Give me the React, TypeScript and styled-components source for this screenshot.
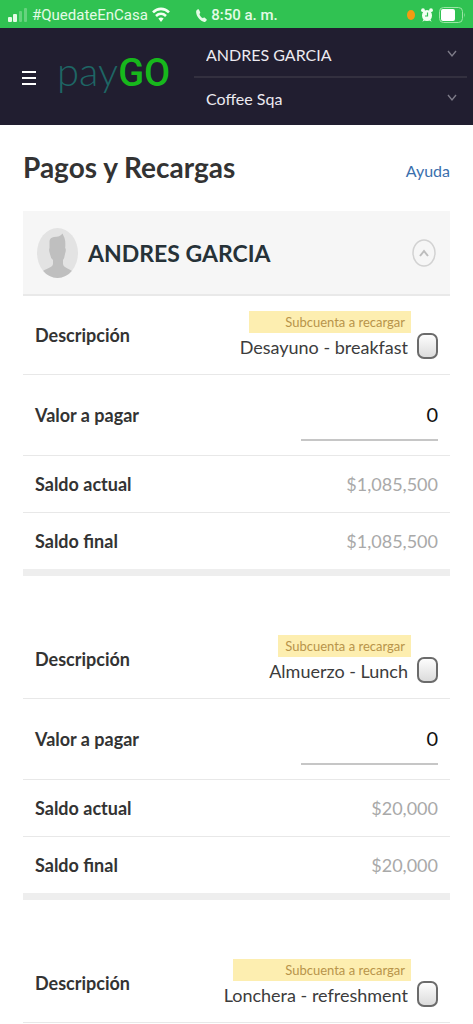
import React from "react";
import styled, { createGlobalStyle } from "styled-components";

const GlobalStyle = createGlobalStyle`
  *, *::before, *::after { box-sizing: border-box; }
  body {
    margin: 0;
    background: #fff;
    color: #333;
    font-family: Lato, "Open Sans", sans-serif;
    font-size: 18px;
    line-height: 24px;
  }
`;

const StatusBar = styled.div`
  display: grid;
  grid-template-columns: 1fr auto 1fr;
  align-items: center;
  height: 28px;
  padding: 2px 7px 0 8px;
  background: #30c252;
  color: #e4fbe6;
  font-family: Roboto, sans-serif;
  font-size: 15px;
  line-height: 20px;
`;

const StatusGroup = styled.div<{ $end?: boolean }>`
  display: flex;
  align-items: center;
  justify-content: ${(p) => (p.$end ? "flex-end" : "flex-start")};
  gap: ${(p) => (p.$end ? 6 : 4)}px;
`;

const Clock = styled.span`
  font-weight: 500;
  white-space: nowrap;
`;

const TopBar = styled.header`
  display: flex;
  align-items: center;
  height: 97px;
  padding: 0 6px 2px 20px;
  background: #211e30;
`;

const MenuButton = styled.button`
  display: flex;
  padding: 4px 2px 0;
  border: 0;
  background: none;
  color: #fff;
`;

const Brand = styled.a`
  display: flex;
  align-items: baseline;
  width: 156px;
  padding: 0 0 8px 19px;
  color: #1e6665;
  font-size: 40px;
  font-weight: 300;
  line-height: 48px;
  text-decoration: none;
`;

const BrandStrong = styled.span`
  color: #17b81c;
  font-family: Roboto, sans-serif;
  font-size: 38px;
  font-weight: 500;
`;

const Pickers = styled.div`
  flex: 1;
  min-width: 0;
`;

const Picker = styled.div`
  display: grid;
  grid-template-columns: 1fr auto;
  align-items: center;
  height: 43px;
  padding: 0 10px 0 12px;

  & + & { border-top: 2px solid #33303f; }
`;

const PickerSelect = styled.select`
  grid-area: 1 / 1 / 2 / 3;
  width: 100%;
  height: 32px;
  padding: 0;
  border: 0;
  appearance: none;
  background: none;
  color: #eceaf0;
  font-family: inherit;
  font-size: 16px;
`;

const PickerArrow = styled.svg`
  grid-area: 1 / 2;
  pointer-events: none;
`;

const Page = styled.main`
  padding: 0 23px;
`;

const TitleRow = styled.div`
  display: flex;
  align-items: center;
  justify-content: space-between;
  height: 86px;
  padding-bottom: 2px;
`;

const Title = styled.h1`
  margin: 0;
  font-size: 28px;
  font-weight: 700;
  line-height: 36px;
`;

const HelpLink = styled.a`
  padding-top: 8px;
  color: #3a70ad;
  font-size: 16px;
  text-decoration: none;
`;

const PersonBar = styled.div`
  display: flex;
  align-items: center;
  gap: 10px;
  height: 85px;
  padding: 0 14px;
  border-bottom: 2px solid #e9e9e9;
  background: #f6f6f6;
`;

const PersonName = styled.h2`
  flex: 1;
  margin: 0;
  color: #263238;
  font-size: 23px;
  font-weight: 700;
  line-height: 32px;
`;

const CollapseButton = styled.button`
  display: flex;
  padding: 0;
  border: 0;
  background: none;
`;

const Account = styled.table`
  width: 100%;
  border-spacing: 0;

  & + & { margin-top: 44px; }
`;

const Row = styled.tr<{ $height: number; $last?: boolean }>`
  & > * {
    height: ${(p) => p.$height}px;
    padding: 0 12px;
    border-bottom: ${(p) => (p.$last ? "7px solid #eee" : "1px solid #e8e8e8")};
    vertical-align: middle;
  }
`;

const RowLabel = styled.th`
  font-weight: 700;
  text-align: left;
  white-space: nowrap;
`;

const RowValue = styled.td`
  color: #a9a9a9;
  font-size: 18px;
  text-align: right;
`;

const Choice = styled.label`
  display: flex;
  align-items: flex-end;
  justify-content: flex-end;
  gap: 9px;
  color: #3c3c3c;
  font-size: 18px;
`;

const ChoiceText = styled.span`
  display: grid;
  gap: 2px;
`;

const Tag = styled.span`
  margin: 0 -3px 0 9px;
  padding-right: 6px;
  background: #fdeeb0;
  color: #b8944a;
  font-size: 13px;
  line-height: 22px;
  white-space: nowrap;
`;

const Tick = styled.input`
  width: 21px;
  height: 26px;
  margin: 0;
  border: 2px solid #6b6b6b;
  border-radius: 7px;
  appearance: none;
  background: linear-gradient(#fdfdfd, #dcdcdc);

  &:checked { background: #3a70ad; }
`;

const Amount = styled.input`
  width: 137px;
  height: 52px;
  padding: 0;
  border: 0;
  border-bottom: 2px solid #c6c6c6;
  background: none;
  color: #111;
  font-family: inherit;
  font-size: 20px;
  text-align: right;
  vertical-align: middle;
`;

const SignalIcon = () => (
  <svg width="20" height="14" viewBox="0 0 20 14" fill="#e4fbe6" aria-hidden="true">
    <rect x="0" y="9" width="4" height="5" rx="1" />
    <rect x="5" y="6" width="4" height="8" rx="1" />
    <rect x="11" y="3" width="3" height="11" rx="1" opacity=".3" />
    <rect x="16" y="0" width="3" height="14" rx="1" opacity=".3" />
  </svg>
);

const WifiIcon = () => (
  <svg width="18" height="16" viewBox="0 0 18 16" fill="none" stroke="#f2fff2" strokeWidth="2.6" aria-hidden="true">
    <path d="M1 5.4C5.6.7 12.4.7 17 5.4" />
    <path d="M4 9C7 6.2 11 6.2 14 9" />
    <path d="M6.4 11.6Q9 9.6 11.6 11.6L9 15Z" fill="#f2fff2" stroke="none" />
  </svg>
);

const PhoneIcon = () => (
  <svg width="11" height="13" viewBox="0 0 11 13" fill="#e4fbe6" aria-hidden="true">
    <path d="M.6 1.3C1.5.2 2.5 0 3 .8L4.2 3.2C4.5 4 3.3 4.7 3.5 5.3C4 6.9 5.2 8.4 6.6 9.1C7.3 9.4 7.7 8.2 8.5 8.6L10.5 10.2C11.2 10.9 10.4 12.1 9.3 12.7C7.5 13.5 4.4 11.5 2.5 9C.4 6.2-.5 2.7.6 1.3Z" />
  </svg>
);

const AlarmIcon = () => (
  <svg width="12" height="14" viewBox="0 0 12 14" aria-hidden="true">
    <g fill="#f2fff2">
      <ellipse cx="6" cy="7.5" rx="5" ry="5.5" />
      <circle cx="2" cy="2.2" r="1.9" />
      <circle cx="10" cy="2.2" r="1.9" />
      <path d="M1.3 13.7 3 11l1.5 1zM10.7 13.7 9 11l-1.5 1z" />
    </g>
    <path d="M6.5 4.5V8H4" fill="none" stroke="#30c252" strokeWidth="1.2" />
  </svg>
);

const BatteryIcon = () => (
  <svg width="27" height="16" viewBox="0 0 27 16" aria-hidden="true">
    <rect x=".5" y=".5" width="23" height="15" rx="4" fill="none" stroke="#9be6a6" />
    <rect x="2" y="2" width="14" height="12" rx="2" fill="#fff" />
    <path d="M25 5.5q1.5 2.5 0 5z" fill="#9be6a6" />
  </svg>
);

const RecordingDot = styled.span`
  width: 8px;
  height: 10px;
  border-radius: 50%;
  background: #f39b12;
`;

const Arrow = () => (
  <PickerArrow width="10" height="8" viewBox="0 0 10 8" fill="none" stroke="#7d7b88" strokeWidth="1.4" aria-hidden="true">
    <path d="M1 1l4 5 4-5" />
  </PickerArrow>
);

const Avatar = () => (
  <svg width="41" height="50" viewBox="0 0 41 50" aria-hidden="true">
    <defs>
      <clipPath id="avatar-edge"><ellipse cx="20.5" cy="25" rx="20.5" ry="25" /></clipPath>
    </defs>
    <g clipPath="url(#avatar-edge)">
      <path fill="#e3e3e3" d="M0 0h41v50H0z" />
      <path fill="#bfbfbf" d="M12.5 13Q13 9.5 17 9Q23 9 25.5 5.5L27.5 10Q28.700 13 28.2 20Q29.5 21.5 28 26Q27.5 30 26 32V36C26.5 39.500 31 40 35 43V50H6V43C10 40 15.5 39.5 16 36V32Q13.5 30 13 26Q11.5 22 12.5 20Z" />
    </g>
  </svg>
);

type AccountData = { id: string; name: string; balance?: string };

const accounts: AccountData[] = [
  { id: "desayuno", name: "Desayuno - breakfast", balance: "$1,085,500" },
  { id: "almuerzo", name: "Almuerzo - Lunch", balance: "$20,000" },
  { id: "lonchera", name: "Lonchera - refreshment" },
];

const AccountTable = ({ id, name, balance }: AccountData) => (
  <Account>
    <tbody>
      <Row $height={79}>
        <RowLabel scope="row">Descripción</RowLabel>
        <RowValue>
          <Choice>
            <ChoiceText>
              <Tag>Subcuenta a recargar</Tag>
              <span>{name}</span>
            </ChoiceText>
            <Tick type="checkbox" />
          </Choice>
        </RowValue>
      </Row>
      {balance && (
        <>
          <Row $height={81}>
            <RowLabel scope="row"><label htmlFor={id}>Valor a pagar</label></RowLabel>
            <RowValue><Amount id={id} inputMode="numeric" defaultValue="0" /></RowValue>
          </Row>
          <Row $height={57}>
            <RowLabel scope="row">Saldo actual</RowLabel>
            <RowValue>{balance}</RowValue>
          </Row>
          <Row $height={63} $last>
            <RowLabel scope="row">Saldo final</RowLabel>
            <RowValue>{balance}</RowValue>
          </Row>
        </>
      )}
    </tbody>
  </Account>
);

export default function App() {
  return (
    <>
      <GlobalStyle />
      <StatusBar>
        <StatusGroup>
          <SignalIcon />
          <span>#QuedateEnCasa</span>
          <WifiIcon />
        </StatusGroup>
        <StatusGroup>
          <PhoneIcon />
          <Clock>8:50 a. m.</Clock>
        </StatusGroup>
        <StatusGroup $end>
          <RecordingDot />
          <AlarmIcon />
          <BatteryIcon />
        </StatusGroup>
      </StatusBar>
      <TopBar>
        <MenuButton aria-label="Menú">
          <svg width="14" height="16" viewBox="0 0 14 16" fill="#fff" aria-hidden="true">
            <path d="M0 1h14v2H0zM0 7h14v2H0zM0 13h14v2H0z" />
          </svg>
        </MenuButton>
        <Brand href="#">pay<BrandStrong>GO</BrandStrong></Brand>
        <Pickers>
          <Picker>
            <PickerSelect aria-label="Usuario"><option>ANDRES GARCIA</option></PickerSelect>
            <Arrow />
          </Picker>
          <Picker>
            <PickerSelect aria-label="Comercio"><option>Coffee Sqa</option></PickerSelect>
            <Arrow />
          </Picker>
        </Pickers>
      </TopBar>
      <Page>
        <TitleRow>
          <Title>Pagos y Recargas</Title>
          <HelpLink href="#">Ayuda</HelpLink>
        </TitleRow>
        <PersonBar>
          <Avatar />
          <PersonName>ANDRES GARCIA</PersonName>
          <CollapseButton aria-label="Contraer">
            <svg width="24" height="28" viewBox="0 0 24 28" fill="none" stroke="#d2d2d2" aria-hidden="true">
              <ellipse cx="12" cy="14" rx="11" ry="13" strokeWidth="1.5" />
              <path d="M8 17l4-5 4 5" stroke="#bdbdbd" strokeWidth="2" />
            </svg>
          </CollapseButton>
        </PersonBar>
        {accounts.map((a) => <AccountTable key={a.id} {...a} />)}
      </Page>
    </>
  );
}
